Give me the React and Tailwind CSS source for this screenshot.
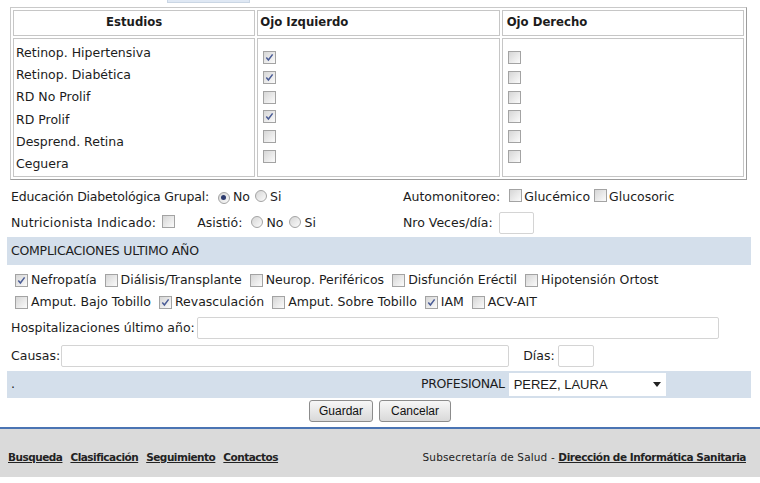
import React from 'react';

const Cb = ({ on }) => (
  <span className="inline-flex w-[13px] h-[13px] shrink-0 items-center justify-center border border-[#a3a3a3] bg-gradient-to-br from-[#d6d6d6] to-[#fbfbfb]">
    {on && (
      <svg width="9" height="9" viewBox="0 0 9 9">
        <path d="M1.3 4.6 L3.4 7 L7.6 1.4" fill="none" stroke="#4a5c96" strokeWidth="1.5" />
      </svg>
    )}
  </span>
);

const Radio = ({ on }) => (
  <span className="inline-flex w-[12px] h-[12px] shrink-0 items-center justify-center rounded-full border border-[#a3a3a3] bg-gradient-to-br from-[#d6d6d6] to-[#fbfbfb]">
    {on && <span className="w-[5px] h-[5px] rounded-full bg-[#2c3a6e]" />}
  </span>
);

const Field = ({ w }) => <span className={`block h-[22px] ${w} rounded-[2px] border border-[#d4d4d4] bg-white`} />;

const estudios = [
  ['Retinop. Hipertensiva', true],
  ['Retinop. Diabética', true],
  ['RD No Prolif', false],
  ['RD Prolif', true],
  ['Desprend. Retina', false],
  ['Ceguera', false],
];

const compl1 = [
  ['Nefropatía', true],
  ['Diálisis/Transplante', false],
  ['Neurop. Periféricos', false],
  ['Disfunción Eréctil', false],
  ['Hipotensión Ortost', false],
];

const compl2 = [
  ['Amput. Bajo Tobillo', false],
  ['Revasculación', true],
  ['Amput. Sobre Tobillo', false],
  ['IAM', true],
  ['ACV-AIT', false],
];

function CheckRow({ items }) {
  return (
    <div className="flex items-center h-[22px] pl-[15px] gap-[8px]">
      {items.map(([label, on]) => (
        <span key={label} className="flex items-center gap-[3px]">
          <Cb on={on} />
          <span>{label}</span>
        </span>
      ))}
    </div>
  );
}

export default function App() {
  return (
    <div className="w-[760px] h-[483px] overflow-hidden bg-white text-[#1c1c1c] font-['DejaVu_Sans',sans-serif] text-[12.5px] leading-none">
      <div className="h-[3px] ml-[167px] w-[83px] bg-[#dfe8f4] border-x border-b border-[#cad6e4]" />

      {/* estudios oftalmologicos */}
      <div className="mt-[4px] ml-[10px] w-[737px] grid grid-cols-3 gap-[2px] p-[2px] border border-t-[#c9c9c9] border-l-[#c9c9c9] border-r-[#9c9c9c] border-b-[#9c9c9c]">
        <div className="h-[26px] flex items-center justify-center border border-[#c6c6c6] font-bold text-[11.7px]">Estudios</div>
        <div className="h-[26px] flex items-center px-[2px] border border-[#c6c6c6] font-bold text-[11.7px]">Ojo Izquierdo</div>
        <div className="h-[26px] flex items-center px-[4px] border border-[#c6c6c6] font-bold text-[11.7px]">Ojo Derecho</div>

        <div className="h-[139px] border border-[#c6c6c6] px-[2px] pt-[3px] leading-[22.2px]">
          {estudios.map(([e]) => (
            <div key={e}>{e}</div>
          ))}
        </div>
        <div className="h-[139px] border border-[#c6c6c6] pl-[5px] pt-[12px] flex flex-col gap-[6.8px]">
          {estudios.map(([e, on]) => (
            <Cb key={e} on={on} />
          ))}
        </div>
        <div className="h-[139px] border border-[#c6c6c6] pl-[5px] pt-[12px] flex flex-col gap-[6.8px]">
          {estudios.map(([e]) => (
            <Cb key={e} on={false} />
          ))}
        </div>
      </div>

      {/* educacion / automonitoreo */}
      <div className="mt-[4px] h-[26px] flex items-center pl-[11px]">
        <div className="w-[392px] flex items-center">
          <span className="tracking-[-0.2px]">Educación Diabetológica Grupal:</span>
          <span className="ml-[9px]"><Radio on /></span>
          <span className="ml-[3px]">No</span>
          <span className="ml-[5px]"><Radio /></span>
          <span className="ml-[3px]">Si</span>
        </div>
        <div className="flex items-center">
          <span>Automonitoreo:</span>
          <span className="ml-[9px]"><Cb /></span>
          <span className="ml-[2px]">Glucémico</span>
          <span className="ml-[4px]"><Cb /></span>
          <span className="ml-[2px]">Glucosoric</span>
        </div>
      </div>

      <div className="h-[26px] flex items-center pl-[11px]">
        <div className="w-[392px] flex items-center">
          <span className="tracking-[0.2px]">Nutricionista Indicado:</span>
          <span className="ml-[6px]"><Cb /></span>
          <span className="ml-[22px]">Asistió:</span>
          <span className="ml-[9px]"><Radio /></span>
          <span className="ml-[3px]">No</span>
          <span className="ml-[6px]"><Radio /></span>
          <span className="ml-[3px]">Si</span>
        </div>
        <div className="flex items-center">
          <span>Nro Veces/día:</span>
          <span className="ml-[6px]"><Field w="w-[35px]" /></span>
        </div>
      </div>

      {/* complicaciones */}
      <div className="mt-[1px] ml-[7px] w-[744px] h-[28px] flex items-center pl-[4px] bg-[#d4dfeb] tracking-[-0.25px]">
        COMPLICACIONES ULTIMO AÑO
      </div>
      <div className="mt-[4px]">
        <CheckRow items={compl1} />
        <CheckRow items={compl2} />
      </div>

      <div className="mt-[4px] h-[22px] flex items-center pl-[11px]">
        <span>Hospitalizaciones último año:</span>
        <span className="ml-[2px]"><Field w="w-[522px]" /></span>
      </div>
      <div className="mt-[6px] h-[22px] flex items-center pl-[11px]">
        <span>Causas:</span>
        <span className="ml-[1px]"><Field w="w-[448px]" /></span>
        <span className="ml-[14px]">Días:</span>
        <span className="ml-[3px]"><Field w="w-[36px]" /></span>
      </div>

      <div className="mt-[4px] ml-[7px] w-[744px] h-[27px] flex items-center bg-[#d4dfeb]">
        <span className="w-[414px] pl-[4px]">.</span>
        <span className="tracking-[-0.35px]">PROFESIONAL</span>
        <span className="ml-[4px] w-[157px] h-[23px] flex items-center justify-between bg-white pl-[5px] pr-[5px] font-['Liberation_Sans',Arial,sans-serif] text-[13px]">
          PEREZ, LAURA
          <svg width="8" height="5" viewBox="0 0 8 5"><path d="M0 0 H8 L4 5 Z" fill="#222" /></svg>
        </span>
      </div>

      <div className="mt-[2px] flex justify-center gap-[6px] font-['Liberation_Sans',Arial,sans-serif] text-[12px]">
        <button className="w-[64px] h-[22px] rounded-[3px] border border-[#8c8c8c] bg-gradient-to-b from-[#f7f7f7] to-[#d9d9d9] text-[#111]">Guardar</button>
        <button className="w-[72px] h-[22px] rounded-[3px] border border-[#8c8c8c] bg-gradient-to-b from-[#f7f7f7] to-[#d9d9d9] text-[#111]">Cancelar</button>
      </div>

      {/* pie */}
      <div className="mt-[5px] border-t-2 border-[#4a74b3] bg-[#dadada] h-[50px] flex items-center justify-between pt-[8px] pl-[8px] pr-[14px] text-[10.5px] text-[#222]">
        <div className="flex gap-[8px] font-bold underline tracking-[-0.5px]">
          <span>Busqueda</span>
          <span>Clasificación</span>
          <span>Seguimiento</span>
          <span>Contactos</span>
        </div>
        <div className="tracking-[0.15px]">
          Subsecretaría de Salud - <span className="font-bold underline tracking-[-0.45px]">Dirección de Informática Sanitaria</span>
        </div>
      </div>
    </div>
  );
}
